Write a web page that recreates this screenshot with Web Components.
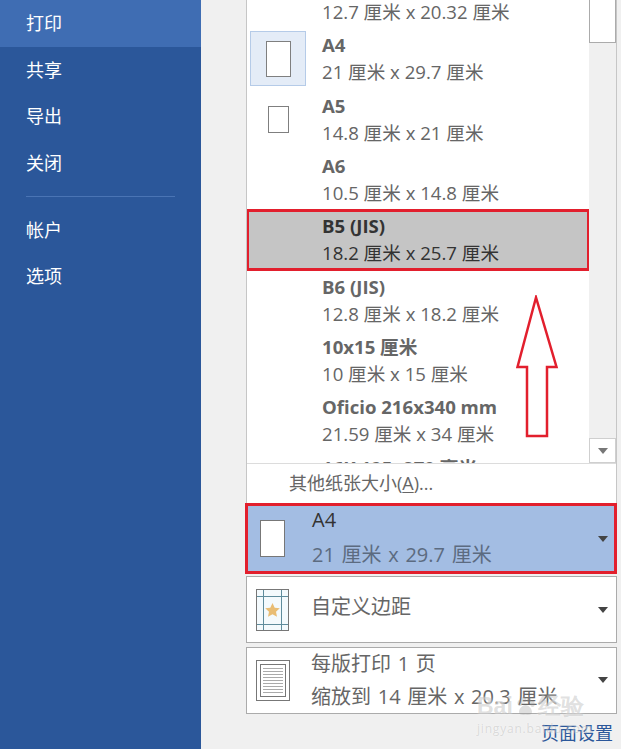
<!DOCTYPE html>
<html lang="zh">
<head>
<meta charset="utf-8">
<title>打印</title>
<style>
  html, body { margin: 0; height: 100%; overflow: hidden; background: #f0f0f0; }
  body { font-family: "Open Sans", "Noto Sans CJK SC", sans-serif; }
</style>
</head>
<body>
<print-backstage>
  <nav-item slot="nav" active>打印</nav-item>
  <nav-item slot="nav">共享</nav-item>
  <nav-item slot="nav">导出</nav-item>
  <nav-item slot="nav">关闭</nav-item>
  <nav-divider slot="nav"></nav-divider>
  <nav-item slot="nav">帐户</nav-item>
  <nav-item slot="nav">选项</nav-item>

  <paper-menu>
    <paper-row>12.7 厘米 x 20.32 厘米</paper-row>
    <paper-row page="a4" current><span slot="name">A4</span>21 厘米 x 29.7 厘米</paper-row>
    <paper-row page="a5"><span slot="name">A5</span>14.8 厘米 x 21 厘米</paper-row>
    <paper-row><span slot="name">A6</span>10.5 厘米 x 14.8 厘米</paper-row>
    <paper-row marked><span slot="name">B5 (JIS)</span>18.2 厘米 x 25.7 厘米</paper-row>
    <paper-row><span slot="name">B6 (JIS)</span>12.8 厘米 x 18.2 厘米</paper-row>
    <paper-row><span slot="name">10x15 厘米</span>10 厘米 x 15 厘米</paper-row>
    <paper-row><span slot="name">Oficio 216x340 mm</span>21.59 厘米 x 34 厘米</paper-row>
    <paper-row><span slot="name">16K 195x270 毫米</span></paper-row>
  </paper-menu>

  <print-select open>
    <svg slot="icon" width="27" height="38" viewBox="0 0 27 38"><rect x=".5" y=".5" width="24" height="36" fill="#fff" stroke="#777"/></svg>
    <span slot="line1">A4</span>
    <span slot="line2">21 厘米 x 29.7 厘米</span>
  </print-select>
  <print-select single>
    <svg slot="icon" width="34" height="42" viewBox="0 0 34 42">
      <rect x=".5" y=".5" width="32" height="41" fill="#f4fafd" stroke="#777"/>
      <path d="M7.5 1v40M25.5 1v40M1 7.5h31M1 35.5h31" stroke="#5f8c9c" fill="none"/>
      <path d="M16.5 14l2.2 4.7 5.1.6-3.8 3.5 1 5-4.5-2.5-4.5 2.5 1-5-3.8-3.5 5.1-.6z" fill="#e9bd74"/>
    </svg>
    <span slot="line1">自定义边距</span>
  </print-select>
  <print-select>
    <svg slot="icon" width="34" height="41" viewBox="0 0 34 41">
      <rect x=".5" y=".5" width="33" height="40" fill="#fff" stroke="#777"/>
      <rect x="4.5" y="4.5" width="25" height="32" fill="#fff" stroke="#777"/>
      <path d="M7 8.500h20M7 11.500h20M7 14.500h20M7 17.500h20M7 20.500h20M7 23.500h20M7 26.500h20M7 29.500h20M7 32.500h20" stroke="#aaa"/>
    </svg>
    <span slot="line1">每版打印 1 页</span>
    <span slot="line2">缩放到 14 厘米 x 20.3 厘米</span>
  </print-select>
  <span slot="link">页面设置</span>
</print-backstage>

<script>
class PrintBackstage extends HTMLElement {
  constructor() {
    super();
    this.shadow = this.attachShadow({ mode: "open" });
  }

  connectedCallback() {
    this.shadow.innerHTML = `
      <style>
        :host {
          display: grid;
          grid-template-columns: 201px 1fr;
          width: 621px;
          height: 749px;
          overflow: hidden;
          position: relative;
        }
        nav {
          background: #2b579a;
          display: flex;
          flex-direction: column;
        }
        main {
          padding-left: 45px;
          width: 371px;
          display: flex;
          flex-direction: column;
        }
        ::slotted(print-select) { margin-bottom: 4px; }
        .link {
          align-self: flex-end;
          margin: 2px 4px 0 0;
          font-size: 18px;
          line-height: 26px;
          color: #2b579a;
        }
        /* red arrow drawn on top of the screenshot */
        .arrow { position: absolute; left: 515px; top: 295px; }
        .mark {
          position: absolute;
          left: 477px;
          top: 695px;
          color: rgba(150, 150, 150, .3);
          text-shadow: 0 0 2px rgba(255, 255, 255, .7);
          line-height: 1;
          white-space: nowrap;
        }
        .mark b { display: flex; align-items: center; gap: 2px; font-size: 23px; font-family: "Liberation Sans", sans-serif; }
        .mark i { display: block; font-size: 12px; font-style: normal; letter-spacing: .8px; margin-top: 5px; }
      </style>
      <nav><slot name="nav"></slot></nav>
      <main>
        <slot></slot>
        <div class="link"><slot name="link"></slot></div>
      </main>
      <svg class="arrow" width="44" height="144" viewBox="0 0 44 144">
        <path d="M21 2.500L2.500 72H12V141H32V72H41.500z" fill="#fff" stroke="#e21f2d" stroke-width="2.500"/>
      </svg>
      <div class="mark" aria-hidden="true">
        <b>Bai<svg width="21" height="21" viewBox="0 0 21 21" fill="currentColor"><ellipse cx="5" cy="7" rx="2.500" ry="3"/><ellipse cx="9" cy="3.500" rx="2.200" ry="3"/><ellipse cx="14" cy="4" rx="2.200" ry="3"/><ellipse cx="17.500" cy="8" rx="2.200" ry="3"/><path d="M10.500 9C7 9 4 13 4 16c0 3 3.500 3 6.500 2.500C14 19 17 19 17 16c0-3-3-7-6.500-7z"/></svg>经验</b>
        <i>jingyan.baidu.com</i>
      </div>
    `;
  }
}

class NavItem extends HTMLElement {
  constructor() {
    super();
    this.attachShadow({ mode: "open" }).innerHTML = `
      <style>
        :host {
          display: flex;
          align-items: center;
          height: 46.600px;
          box-sizing: border-box;
          padding: 0 0 2px 26px;
          font-size: 18px;
          color: #fff;
        }
        :host([active]) { background: #3f6db3; }
      </style>
      <slot></slot>
    `;
  }
}

class NavDivider extends HTMLElement {
  constructor() {
    super();
    this.attachShadow({ mode: "open" }).innerHTML = `
      <style>
        :host {
          display: block;
          height: 1px;
          margin: 10px 26px 9px 26px;
          background: #4a74b4;
        }
      </style>
    `;
  }
}

class PaperMenu extends HTMLElement {
  constructor() {
    super();
    this.attachShadow({ mode: "open" }).innerHTML = `
      <style>
        :host {
          display: flex;
          flex-direction: column;
          height: 503px;
          box-sizing: border-box;
          background: #fff;
          border-left: 1px solid #c6c6c6;
          border-right: 1px solid #c6c6c6;
        }
        .top {
          height: 464px;
          display: flex;
          border-bottom: 1px solid #dcdcdc;
          box-sizing: border-box;
        }
        .rows {
          width: 342px;
          overflow: hidden;
        }
        .scroller {
          margin-top: -31.500px;
          display: flex;
          flex-direction: column;
        }
        .bar {
          flex: 1;
          background: #f0f0f0;
          display: flex;
          flex-direction: column;
          justify-content: space-between;
        }
        .thumb {
          height: 43px;
          background: #fff;
          border: 1px solid #ababab;
          border-top: 0;
          box-sizing: border-box;
        }
        .down {
          height: 25px;
          background: #fff;
          border: 1px solid #cfcfcf;
          box-sizing: border-box;
          display: flex;
          align-items: center;
          justify-content: center;
        }
        .down::before {
          content: "";
          border: 5px solid transparent;
          border-top: 6px solid #777;
          border-bottom: 0;
        }
        .more {
          flex: 1;
          padding: 0 0 3px 42px;
          display: flex;
          align-items: center;
          font-size: 18px;
          color: #666;
          white-space: pre;
        }
        u { text-underline-offset: 2px; }
      </style>
      <div class="top">
        <div class="rows"><div class="scroller"><slot></slot></div></div>
        <div class="bar"><div class="thumb"></div><div class="down"></div></div>
      </div>
      <div class="more"><span>其他纸张大小(<u>A</u>)...</span></div>
    `;
  }
}

class PaperRow extends HTMLElement {
  constructor() {
    super();
    this.attachShadow({ mode: "open" }).innerHTML = `
      <style>
        :host {
          display: block;
          height: 60.330px;
          box-sizing: border-box;
          position: relative;
          color: #666;
        }
        :host([marked]) {
          background: #c5c5c5;
          color: #333;
          outline: 3px solid #e21f2d;
          outline-offset: -2px;
          z-index: 1;
        }
        .wrap {
          display: flex;
          height: 100%;
        }
        .thumb {
          width: 75px;
          flex: none;
          display: flex;
          align-items: center;
          justify-content: center;
        }
        .thumb span {
          display: flex;
          align-items: center;
          justify-content: center;
          width: 56px;
          height: 55px;
          margin-right: 13px;
          box-sizing: border-box;
        }
        .a4 { background: #e4ecf7; border: 1px solid #b5cbe8; }
        .thumb i { display: block; background: #fff; border: 1px solid #7f7f7f; box-sizing: border-box; }
        .a4 i { width: 25px; height: 36px; }
        .a5 i { width: 21px; height: 27px; }
        .text { padding-top: 2.500px; }
        .name { font-size: 18.600px; font-weight: 700; line-height: 27px; min-height: 27px; white-space: nowrap; }
        .sub { font-size: 18.600px; line-height: 27px; white-space: nowrap; }
      </style>
      <div class="wrap">
        <div class="thumb"></div>
        <div class="text">
          <div class="name"><slot name="name"></slot></div>
          <div class="sub"><slot></slot></div>
        </div>
      </div>
    `;
  }

  connectedCallback() {
    const page = this.getAttribute("page");
    if (page) {
      this.shadowRoot.querySelector(".thumb").innerHTML = `<span class="${page}"><i></i></span>`;
    }
  }
}

class PrintSelect extends HTMLElement {
  constructor() {
    super();
    this.attachShadow({ mode: "open" }).innerHTML = `
      <style>
        :host {
          display: flex;
          align-items: center;
          height: 67px;
          box-sizing: border-box;
          background: #fff;
          border: 1px solid #ababab;
          color: #666;
          font-size: 20px;
          word-spacing: 1.500px;
        }
        :host([open]) {
          height: 71px;
          margin-bottom: 2px !important;
          background: #a3bde3;
          border: 3px solid #e21f2d;
          margin-left: -1px;
          color: #5c6b80;
        }
        .icon { width: 64px; flex: none; padding-left: 9px; box-sizing: border-box; display: flex; }
        :host([open]) .icon { padding-left: 12px; width: 64px; }
        .text { flex: 1; display: flex; flex-direction: column; gap: 6px; white-space: nowrap; line-height: 27px; padding-bottom: 2px; }
        :host([open]) .text { gap: 8px; padding-bottom: 3px; }
        :host([single]) .text { padding-bottom: 0; }
        :host([open]) .line1 { color: #333; }
        .caret {
          width: 0;
          margin: -2px 8px 0 0;
          border: 5px solid transparent;
          border-top: 6px solid #444;
          border-bottom: 0;
        }
        :host([open]) .caret { margin: 0 6px 0 0; }
        :host([single]) .caret { margin-top: 0; }
      </style>
      <div class="icon"><slot name="icon"></slot></div>
      <div class="text">
        <div class="line1"><slot name="line1"></slot></div>
        <div class="line2"><slot name="line2"></slot></div>
      </div>
      <div class="caret"></div>
    `;
  }
}

customElements.define("print-backstage", PrintBackstage);
customElements.define("nav-item", NavItem);
customElements.define("nav-divider", NavDivider);
customElements.define("paper-menu", PaperMenu);
customElements.define("paper-row", PaperRow);
customElements.define("print-select", PrintSelect);
</script>
</body>
</html>
